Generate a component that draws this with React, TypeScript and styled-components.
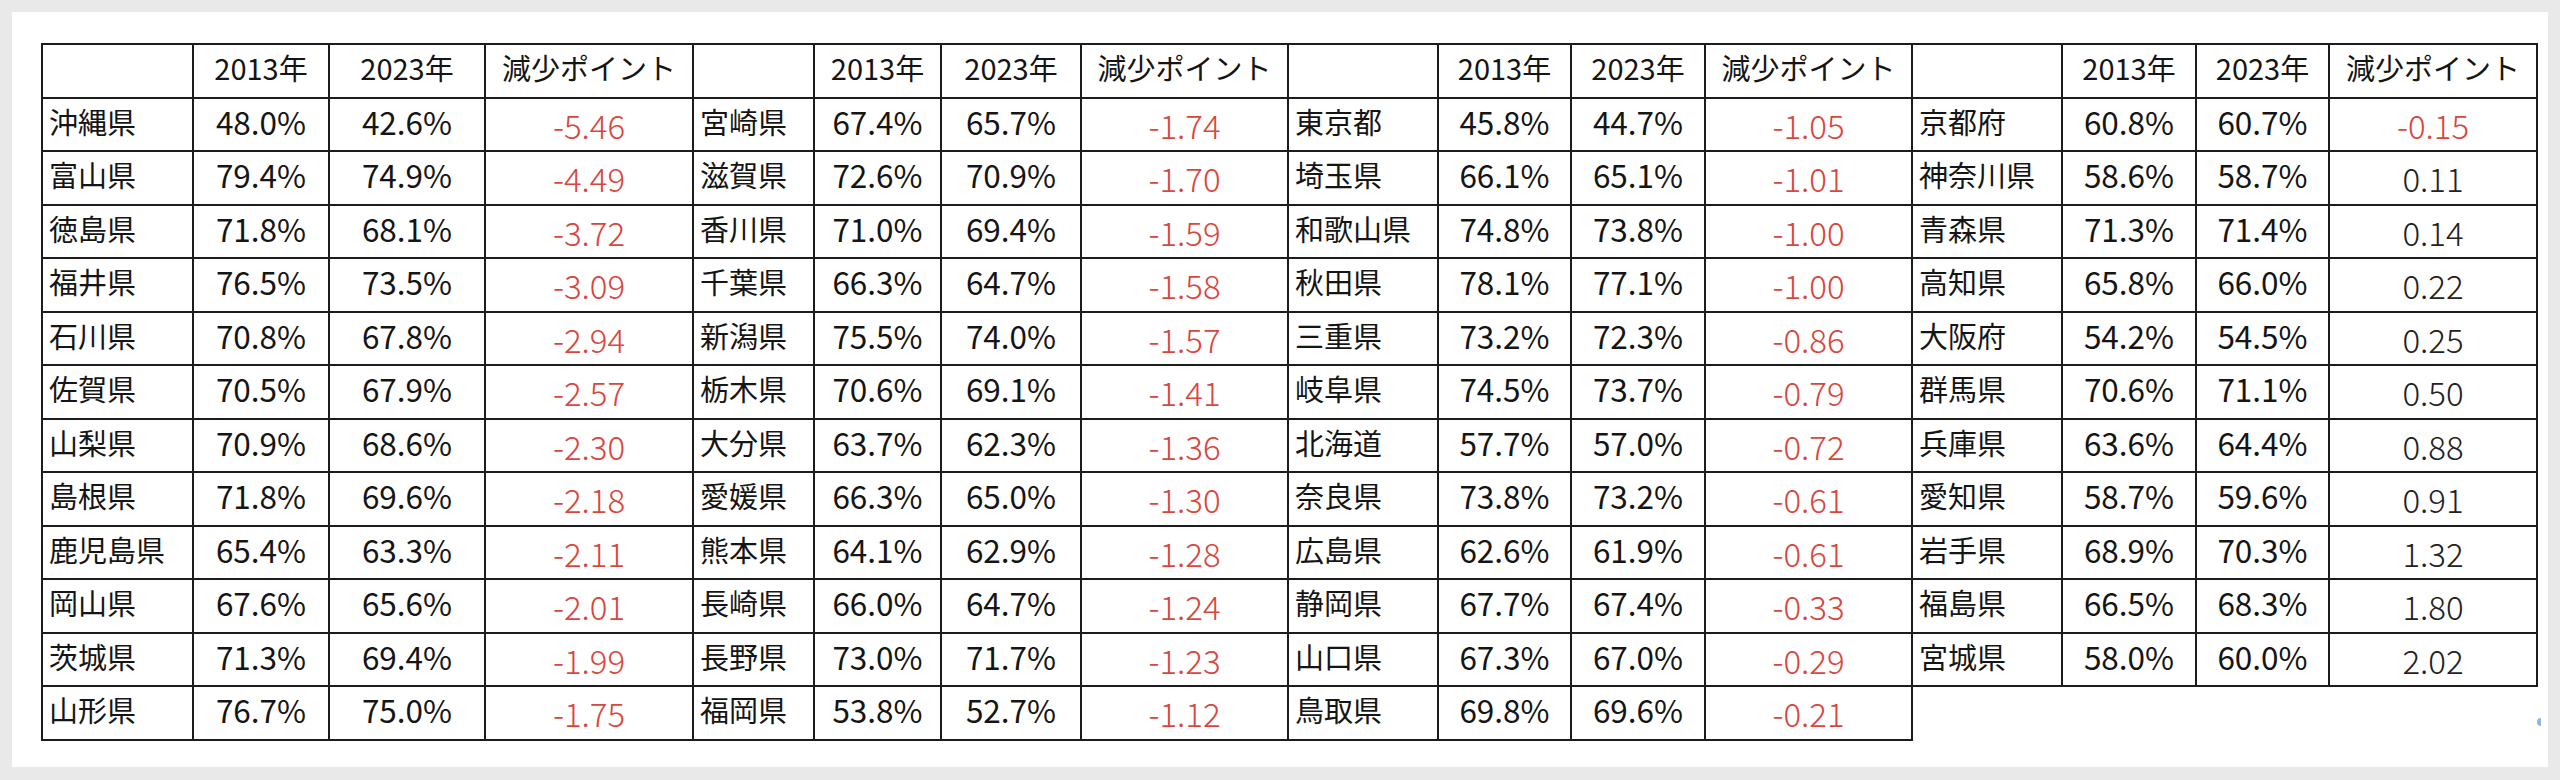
import styled, { createGlobalStyle } from "styled-components"

const GlobalStyle = createGlobalStyle`
	html, body {
		margin: 0;
		padding: 0;
		background: #e9e9e9;
	}
`

const Page = styled.div`
	width: 2560px;
	height: 780px;
	padding: 12px 0 0 12px;
	box-sizing: border-box;
`

const Panel = styled.div`
	position: relative;
	width: 2536px;
	height: 755px;
	background: #ffffff;
	padding: 31px 0 0 29px;
	box-sizing: border-box;
`

const Table = styled.table`
	border-collapse: collapse;
	table-layout: fixed;
	width: 2495px;
	color: #151515;
	font-family: "Noto Sans CJK JP", sans-serif;
`

const Row = styled.tr`
	height: 53.5px;
`

const Cell = styled.td<{ $kind: "name" | "pct" | "diff" | "head"; $neg?: boolean }>`
	border: 2px solid #1c1c1c;
	padding: 0;
	white-space: nowrap;
	overflow: hidden;
	line-height: 1;
	vertical-align: middle;
	text-align: ${(p) => (p.$kind === "name" ? "left" : "center")};
	padding-left: ${(p) => (p.$kind === "name" ? "6px" : "0")};
	padding-bottom: ${(p) => (p.$kind === "diff" ? "0" : "6px")};
	padding-top: ${(p) => (p.$kind === "diff" ? "2px" : "0")};
	font-size: ${(p) =>
		p.$kind === "diff" ? "33px" : p.$kind === "pct" ? "31.5px" : "29px"};
	font-weight: ${(p) => (p.$kind === "diff" ? 300 : 400)};
	color: ${(p) =>
		p.$neg ? "#d9463e" : p.$kind === "diff" ? "#222222" : "#151515"};
`

const Fleck = styled.span`
	position: absolute;
	left: 2525px;
	top: 706px;
	width: 4px;
	height: 8px;
	border-radius: 4px 0 0 4px;
	background: #8fb6dc;
`

type Entry = [string, string, string, string]

const BLOCKS: Entry[][] = [
	[
		["沖縄県", "48.0%", "42.6%", "-5.46"],
		["富山県", "79.4%", "74.9%", "-4.49"],
		["徳島県", "71.8%", "68.1%", "-3.72"],
		["福井県", "76.5%", "73.5%", "-3.09"],
		["石川県", "70.8%", "67.8%", "-2.94"],
		["佐賀県", "70.5%", "67.9%", "-2.57"],
		["山梨県", "70.9%", "68.6%", "-2.30"],
		["島根県", "71.8%", "69.6%", "-2.18"],
		["鹿児島県", "65.4%", "63.3%", "-2.11"],
		["岡山県", "67.6%", "65.6%", "-2.01"],
		["茨城県", "71.3%", "69.4%", "-1.99"],
		["山形県", "76.7%", "75.0%", "-1.75"],
	],
	[
		["宮崎県", "67.4%", "65.7%", "-1.74"],
		["滋賀県", "72.6%", "70.9%", "-1.70"],
		["香川県", "71.0%", "69.4%", "-1.59"],
		["千葉県", "66.3%", "64.7%", "-1.58"],
		["新潟県", "75.5%", "74.0%", "-1.57"],
		["栃木県", "70.6%", "69.1%", "-1.41"],
		["大分県", "63.7%", "62.3%", "-1.36"],
		["愛媛県", "66.3%", "65.0%", "-1.30"],
		["熊本県", "64.1%", "62.9%", "-1.28"],
		["長崎県", "66.0%", "64.7%", "-1.24"],
		["長野県", "73.0%", "71.7%", "-1.23"],
		["福岡県", "53.8%", "52.7%", "-1.12"],
	],
	[
		["東京都", "45.8%", "44.7%", "-1.05"],
		["埼玉県", "66.1%", "65.1%", "-1.01"],
		["和歌山県", "74.8%", "73.8%", "-1.00"],
		["秋田県", "78.1%", "77.1%", "-1.00"],
		["三重県", "73.2%", "72.3%", "-0.86"],
		["岐阜県", "74.5%", "73.7%", "-0.79"],
		["北海道", "57.7%", "57.0%", "-0.72"],
		["奈良県", "73.8%", "73.2%", "-0.61"],
		["広島県", "62.6%", "61.9%", "-0.61"],
		["静岡県", "67.7%", "67.4%", "-0.33"],
		["山口県", "67.3%", "67.0%", "-0.29"],
		["鳥取県", "69.8%", "69.6%", "-0.21"],
	],
	[
		["京都府", "60.8%", "60.7%", "-0.15"],
		["神奈川県", "58.6%", "58.7%", "0.11"],
		["青森県", "71.3%", "71.4%", "0.14"],
		["高知県", "65.8%", "66.0%", "0.22"],
		["大阪府", "54.2%", "54.5%", "0.25"],
		["群馬県", "70.6%", "71.1%", "0.50"],
		["兵庫県", "63.6%", "64.4%", "0.88"],
		["愛知県", "58.7%", "59.6%", "0.91"],
		["岩手県", "68.9%", "70.3%", "1.32"],
		["福島県", "66.5%", "68.3%", "1.80"],
		["宮城県", "58.0%", "60.0%", "2.02"],
	],
]

const COL_WIDTHS = [
	151, 136, 156, 208,
	121, 127, 140, 207,
	150, 133, 134, 207,
	150, 134, 133, 208,
]

export default function App() {
	return (
		<>
			<GlobalStyle />
			<Page>
				<Panel>
					<Table>
						<colgroup>
							{COL_WIDTHS.map((w, i) => (
								<col key={i} style={{ width: w }} />
							))}
						</colgroup>
						<tbody>
							<Row>
								{BLOCKS.map((_, b) => [
									<Cell key={`n${b}`} $kind="head" />,
									<Cell key={`a${b}`} $kind="head">2013年</Cell>,
									<Cell key={`c${b}`} $kind="head">2023年</Cell>,
									<Cell key={`d${b}`} $kind="head">減少ポイント</Cell>,
								])}
							</Row>
							{Array.from({ length: 12 }, (_, r) => (
								<Row key={r}>
									{BLOCKS.map((block, b) => {
										const e = block[r]
										if (!e) return null
										return [
											<Cell key={`n${b}`} $kind="name">{e[0]}</Cell>,
											<Cell key={`a${b}`} $kind="pct">{e[1]}</Cell>,
											<Cell key={`c${b}`} $kind="pct">{e[2]}</Cell>,
											<Cell key={`d${b}`} $kind="diff" $neg={e[3].startsWith("-")}>
												{e[3]}
											</Cell>,
										]
									})}
								</Row>
							))}
						</tbody>
					</Table>
					<Fleck />
				</Panel>
			</Page>
		</>
	)
}
